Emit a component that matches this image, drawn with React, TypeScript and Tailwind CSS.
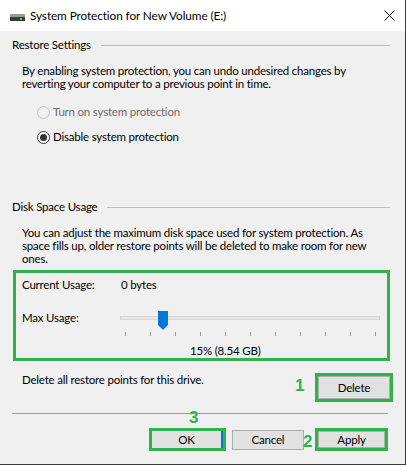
import React from "react";

const ticks = [0, 1, 2, 3, 4, 5, 6, 7, 8, 9, 10];

function Heading({ text }: { text: string }) {
  return (
    <div className="flex items-center h-[16px]">
      <span className="whitespace-nowrap">{text}</span>
      <div className="flex-1 h-px bg-[#bdbdbd] ml-[10px]" />
    </div>
  );
}

export default function App() {
  return (
    <div className="w-[407px] h-[466px] font-['Lato',sans-serif] text-[11.5px] tracking-[-0.2px] text-black overflow-hidden">
      <div className="relative w-[406px] h-[465px] border-r border-b border-[#3c3c3c] flex flex-col bg-[#f0f0f0]">
        {/* Title bar */}
        <div className="h-[31px] bg-white flex items-center shrink-0">
          <svg width="15" height="7" viewBox="0 0 15 7" className="ml-[10px] mt-[4px]">
            <rect x="0" y="0" width="15" height="3" fill="#9a9a9a" />
            <rect x="0" y="3" width="15" height="4" fill="#3a3a3a" />
            <rect x="10" y="4" width="2" height="2" fill="#3fe05a" />
          </svg>
          <span className="ml-[5px] text-[11.8px] tracking-[-0.1px] whitespace-nowrap">System Protection for New Volume (E:)</span>
          <div className="flex-1" />
          <svg width="11" height="11" viewBox="0 0 11 11" className="mr-[10px]">
            <path d="M0.5 0.5 L10.5 10.5 M10.5 0.5 L0.5 10.5" stroke="#111" strokeWidth="1" />
          </svg>
        </div>

        {/* Body */}
        <div className="pl-[12px] pr-[15px] flex flex-col leading-[16px]">
          <div className="mt-[6px]">
            <Heading text="Restore Settings" />
          </div>
          <p className="pl-[10px] mt-[11px] leading-[13px] whitespace-nowrap">
            By enabling system protection, you can undo undesired changes by
            <br />
            reverting your computer to a previous point in time.
          </p>
          <div className="pl-[25px] mt-[14px] flex flex-col">
            <div className="flex items-center h-[16px] text-[#6d6d6d]">
              <span className="w-[13px] h-[13px] rounded-full border border-[#c4c4c4] bg-[#f0f0f0]" />
              <span className="ml-[3px]">Turn on system protection</span>
            </div>
            <div className="flex items-center h-[16px] mt-[9px]">
              <span className="w-[13px] h-[13px] rounded-full border border-[#333] bg-white flex items-center justify-center">
                <span className="w-[7px] h-[7px] rounded-full bg-[#333]" />
              </span>
              <span className="ml-[3px]">Disable system protection</span>
            </div>
          </div>

          <div className="mt-[54px]">
            <Heading text="Disk Space Usage" />
          </div>
          <p className="pl-[10px] mt-[11px] leading-[13px] whitespace-nowrap">
            You can adjust the maximum disk space used for system protection. As
            <br />
            space fills up, older restore points will be deleted to make room for new
            <br />
            ones.
          </p>

          {/* Green box */}
          <div className="ml-[1px] mt-[5px] h-[91px] border-[3px] border-[#2fb34f] flex flex-col">
            <div className="mt-[4px] h-[16px] pl-[6px] flex">
              <span className="w-[99px]">Current Usage:</span>
              <span>0 bytes</span>
            </div>
            <div className="mt-[17px] h-[16px] pl-[6px] flex">
              <span className="w-[98px]">Max Usage:</span>
              <div className="relative w-[260px] h-[16px]">
                <div className="absolute left-0 right-0 top-[6px] h-[4px] bg-[#e7e7e7] border border-[#d6d6d6]" />
                {ticks.map((i) => (
                  <div
                    key={i}
                    className="absolute top-[22px] w-px h-[4px] bg-[#9a9a9a]"
                    style={{ left: 5 + i * 25 }}
                  />
                ))}
                <svg width="10" height="19" viewBox="0 0 10 19" className="absolute left-[38px] top-[1px]">
                  <path d="M0 0 H10 V14 L5 19 L0 14 Z" fill="#0078d7" />
                </svg>
              </div>
            </div>
            <div className="mt-[17px] h-[16px] pl-[174px] whitespace-nowrap">15% (8.54 GB)</div>
          </div>

          {/* Delete row */}
          <div className="mt-[11px] flex items-start justify-between">
            <span className="pl-[10px] mt-0">Delete all restore points for this drive.</span>
            <div className="mt-[1px] mr-[-3px] w-[78px] h-[29px] border-[3px] border-[#2fb34f]">
              <div className="w-full h-full border border-[#adadad] bg-[#e1e1e1] flex items-center justify-center">
                Delete
              </div>
            </div>
          </div>

          <div className="mt-[11px] mr-[2px] h-px bg-[#a0a0a0]" />

          {/* Buttons */}
          <div className="mt-[14px] mr-[2px] flex justify-end items-start">
            <div className="w-[77px] h-[23px] border-[3px] border-[#2fb34f]">
              <div className="w-full h-full bg-[#e1e1e1] border-r-2 border-[#0078d7] flex items-center justify-center">
                OK
              </div>
            </div>
            <div className="ml-[6px] mt-[2px] w-[72px] h-[20px] border border-[#adadad] bg-[#e1e1e1] flex items-center justify-center">
              Cancel
            </div>
            <div className="ml-[11px] w-[73px] h-[23px] border-[3px] border-[#2fb34f]">
              <div className="w-full h-full bg-[#e1e1e1] border border-[#adadad] flex items-center justify-center">
                Apply
              </div>
            </div>
          </div>
        </div>

        {/* Annotation numbers */}
        <span className="absolute left-[295px] top-[376px] text-[17px] font-bold tracking-normal text-[#2fb34f] font-['Liberation_Sans',sans-serif] leading-[20px]">1</span>
        <span className="absolute left-[303px] top-[432px] text-[17px] font-bold tracking-normal text-[#2fb34f] font-['Liberation_Sans',sans-serif] leading-[20px]">2</span>
        <span className="absolute left-[189px] top-[408px] text-[17px] font-bold tracking-normal text-[#2fb34f] font-['Liberation_Sans',sans-serif] leading-[20px]">3</span>
      </div>
    </div>
  );
}
